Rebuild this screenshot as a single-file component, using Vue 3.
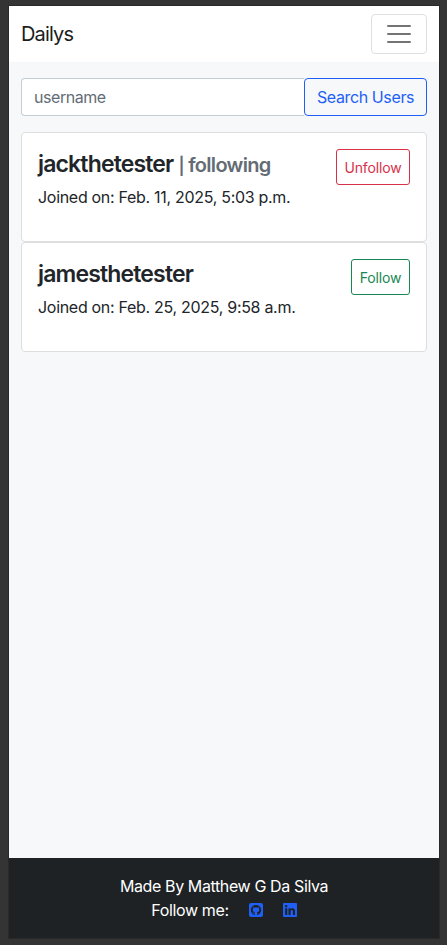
<script setup>
const users = [
  { name: 'jackthetester', following: true, joined: 'Feb. 11, 2025, 5:03 p.m.' },
  { name: 'jamesthetester', following: false, joined: 'Feb. 25, 2025, 9:58 a.m.' }
]
</script>

<template>
  <div class="frame">
    <div class="page">
      <nav class="navbar">
        <a class="brand">Dailys</a>
        <button class="toggler" type="button" aria-label="Toggle navigation">
          <svg viewBox="0 0 30 30" width="30" height="30">
            <path d="M4 7h22M4 15h22M4 23h22" fill="none" stroke="#737475" stroke-width="2" stroke-linecap="round" stroke-miterlimit="10" />
          </svg>
        </button>
      </nav>

      <main class="content">
        <form class="search" @submit.prevent>
          <input class="field" type="text" placeholder="username" />
          <button class="submit" type="submit">Search Users</button>
        </form>

        <article v-for="user in users" :key="user.name" class="card">
          <div class="info">
            <h4 class="name">
              {{ user.name }}<small v-if="user.following"><span class="bar">|</span> following</small>
            </h4>
            <p class="joined">Joined on: {{ user.joined }}</p>
          </div>
          <button class="action" :class="user.following ? 'danger' : 'success'" type="button">
            {{ user.following ? 'Unfollow' : 'Follow' }}
          </button>
        </article>
      </main>

      <footer class="footer">
        <div class="made">Made By Matthew G Da Silva</div>
        <div class="social">
          <span class="label">Follow me:</span>
          <svg class="icon" viewBox="0 32 448 448">
            <path d="M448 96c0-35.3-28.7-64-64-64H64C28.7 32 0 60.7 0 96V416c0 35.3 28.7 64 64 64H384c35.3 0 64-28.7 64-64V96zM265.8 407.7c0-1.8 0-6 .1-11.6c.1-11.4 .1-28.8 .1-43.7c0-15.6-5.2-25.5-11.3-30.7c37-4.1 76-9.2 76-73.1c0-18.2-6.5-27.3-17.1-39c1.7-4.3 7.4-22-1.7-45c-13.9-4.3-45.7 17.9-45.7 17.9c-13.2-3.7-27.5-5.6-41.6-5.6s-28.4 1.9-41.6 5.6c0 0-31.8-22.2-45.7-17.9c-9.1 22.9-3.5 40.6-1.7 45c-10.6 11.7-15.6 20.8-15.6 39c0 63.6 37.3 69 74.3 73.1c-4.8 4.3-9.1 11.7-10.6 22.3c-9.5 4.3-33.8 11.7-48.3-13.9c-9.1-15.8-25.5-17.1-25.5-17.1c-16.2-.2-1.1 10.2-1.1 10.2c10.8 5 18.4 24.2 18.4 24.2c9.7 29.7 56.1 19.7 56.1 19.7c0 9 .1 21.7 .1 30.6c0 4.8 .1 8.6 .1 10c0 4.3-3 9.5-11.5 8C106 393.6 59.8 330.8 59.8 257.4c0-91.8 70.2-161.5 162-161.5s166.2 69.7 166.2 161.5c.1 73.4-44.7 136.3-110.7 158.3c-8.4 1.5-11.5-3.7-11.5-8z" />
          </svg>
          <svg class="icon" viewBox="0 32 448 448">
            <path d="M416 32H31.9C14.3 32 0 46.5 0 64.3v383.4C0 465.5 14.3 480 31.9 480H416c17.6 0 32-14.5 32-32.3V64.3c0-17.8-14.4-32.3-32-32.3zM135.4 416H69V202.2h66.5V416zm-33.2-243c-21.3 0-38.5-17.3-38.5-38.5S80.9 96 102.2 96c21.2 0 38.5 17.3 38.5 38.5 0 21.3-17.2 38.5-38.5 38.5zm282.1 243h-66.4V312c0-24.8-.5-56.7-34.5-56.7-34.6 0-39.9 27-39.9 54.9V416h-66.4V202.2h63.7v29.2h.9c8.9-16.8 30.6-34.5 62.2-34.5 66.5 0 78.9 43.8 78.9 100.9V416z" />
          </svg>
        </div>
      </footer>
    </div>
  </div>
</template>

<style>
body {
  margin: 0;
  background: #343434;
}
</style>

<style scoped>
.frame,
.frame * {
  box-sizing: border-box;
}
.frame {
  height: 945px;
  padding: 6px 8px 7px 9px;
  background: #343434;
  font-family: Inter, "Liberation Sans", sans-serif;
  font-size: 16px;
  line-height: 24px;
  color: #212529;
}
.page {
  display: flex;
  flex-direction: column;
  height: 932px;
  background: #f6f8fa;
  box-shadow: 0 0 0 1px #292929;
}
.navbar {
  display: flex;
  align-items: center;
  justify-content: space-between;
  height: 56px;
  padding: 8px 12px;
  background: #fff;
}
.brand {
  font-size: 20px;
  line-height: 30px;
  letter-spacing: -0.85px;
  color: #1c1c1c;
}
.toggler {
  display: flex;
  align-items: center;
  justify-content: center;
  width: 56px;
  height: 40px;
  padding: 0;
  border: 1px solid #dedfdf;
  border-radius: 4px;
  background: transparent;
}
.content {
  flex: 1;
  padding: 16px 12px;
}
.search {
  display: flex;
  height: 38px;
  margin-bottom: 16px;
}
.field {
  flex: 1;
  min-width: 0;
  padding: 6px 12px;
  border: 1px solid #c4cdd5;
  border-right: 0;
  border-radius: 4px 0 0 4px;
  background: #fff;
  font: inherit;
  letter-spacing: -0.45px;
}
.field::placeholder {
  color: #636c75;
  opacity: 1;
}
.submit {
  width: 123px;
  padding: 0;
  border: 1px solid #1f5ff5;
  border-radius: 4px;
  background: transparent;
  color: #1f5ff5;
  font: inherit;
  letter-spacing: -0.38px;
}
.card {
  display: flex;
  align-items: flex-start;
  justify-content: space-between;
  height: 110px;
  padding: 16px;
  border: 1px solid #dedede;
  border-radius: 4px;
  background: #fff;
}
.name {
  height: 29px;
  margin: 0 0 7px;
  padding-top: 1px;
  font-size: 23px;
  line-height: 29px;
  font-weight: 600;
  letter-spacing: -0.84px;
  white-space: nowrap;
}
.name small {
  margin-left: 5px;
  font-size: 20px;
  line-height: 1;
  letter-spacing: -0.68px;
  color: #636c75;
}
.bar {
  font-size: 17px;
}
.joined {
  margin: 0;
  letter-spacing: -0.3px;
  white-space: nowrap;
}
.action {
  height: 36px;
  padding: 2px 0 0;
  border: 1px solid;
  border-radius: 3px;
  background: transparent;
  font: inherit;
  font-size: 14px;
  letter-spacing: -0.15px;
}
.danger {
  width: 74px;
  color: #d9304a;
}
.success {
  width: 59px;
  color: #198754;
}
.footer {
  height: 80px;
  padding: 16px 0;
  background: #1e2225;
  color: #fff;
  text-align: center;
}
.made {
  letter-spacing: -0.38px;
}
.social {
  display: flex;
  align-items: center;
  justify-content: center;
}
.label {
  letter-spacing: -0.35px;
}
.icon {
  width: 14px;
  height: 14px;
  margin-left: 20px;
  fill: #1f5ff5;
}
</style>
